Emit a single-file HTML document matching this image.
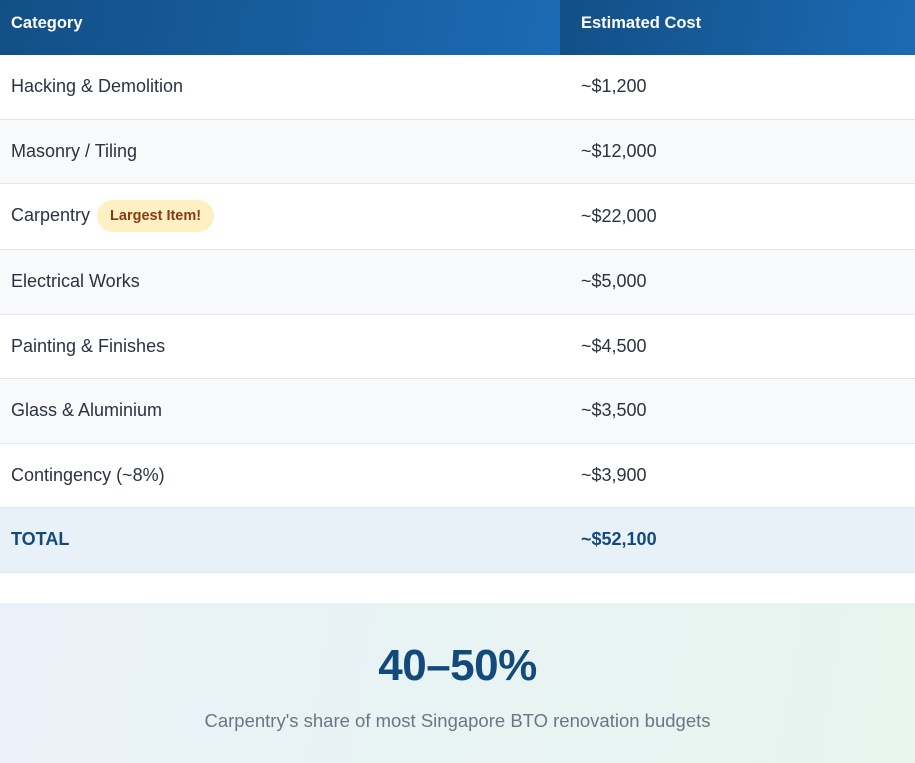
<!DOCTYPE html>
<html><head><style>
body{margin:0;width:915px;height:757px;overflow:hidden;background:#fff;font-family:"Liberation Sans",sans-serif;}
table{border-collapse:collapse;width:915px;table-layout:fixed;}
th{height:55px;padding:0 0 8px 11px;text-align:left;color:#fff;font-size:16.5px;font-weight:bold;background:linear-gradient(100deg,#124f86,#1c6ab4);box-sizing:border-box;}
td{height:64px;padding:0 0 0 11px;font-size:18px;color:#2b3340;border-bottom:1px solid #e2e7ee;box-sizing:border-box;}
td:nth-child(2),th:nth-child(2){padding-left:21px;}
tr:nth-child(odd) td{background:#f7f9fb;}
tr.total td{background:#e9f1f8;color:#134a7c;font-weight:bold;height:65px;}
.badge{display:inline-block;background:#fdf0c2;color:#8a3a12;font-size:14.5px;font-weight:bold;padding:8px 13px;border-radius:16px;margin-left:2px;vertical-align:middle;}
.box{position:absolute;left:0;top:603px;width:915px;height:160px;background:linear-gradient(100deg,#eaf1f8,#e6f5ee);text-align:center;}
.big{position:absolute;top:38px;width:100%;font-size:44px;font-weight:bold;color:#134a7c;letter-spacing:-0.5px;}
.sub{position:absolute;top:107px;width:100%;font-size:18.5px;color:#6b7685;}
</style></head><body>
<table>
<colgroup><col style="width:560px"><col></colgroup>
<tr><th>Category</th><th>Estimated Cost</th></tr>
<tr><td>Hacking &amp; Demolition</td><td>~$1,200</td></tr>
<tr><td>Masonry / Tiling</td><td>~$12,000</td></tr>
<tr><td style="height:66px">Carpentry <span class="badge">Largest Item!</span></td><td>~$22,000</td></tr>
<tr><td style="height:65px">Electrical Works</td><td>~$5,000</td></tr>
<tr><td>Painting &amp; Finishes</td><td>~$4,500</td></tr>
<tr><td style="height:65px">Glass &amp; Aluminium</td><td>~$3,500</td></tr>
<tr><td>Contingency (~8%)</td><td>~$3,900</td></tr>
<tr class="total"><td>TOTAL</td><td>~$52,100</td></tr>
</table>
<div class="box"><div class="big">40–50%</div><div class="sub">Carpentry's share of most Singapore BTO renovation budgets</div></div>
</body></html>
